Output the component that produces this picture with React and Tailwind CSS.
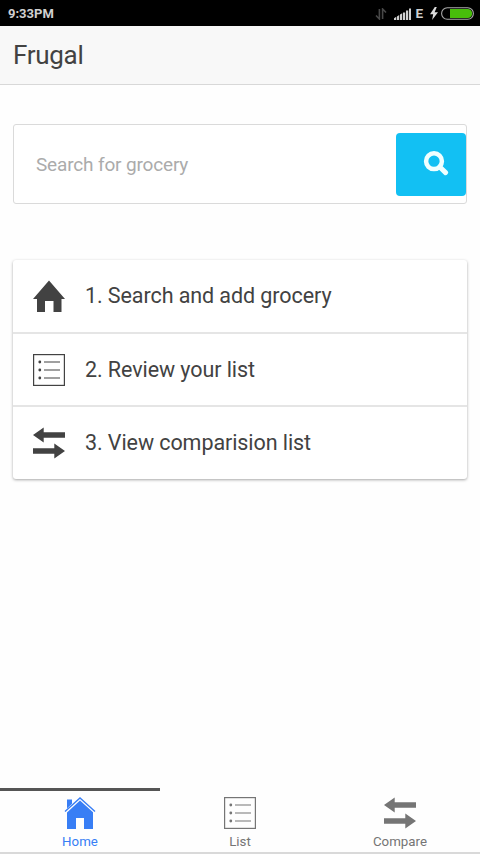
import React from 'react';

function HomeSolid() {
  return (
    <svg width="32" height="32" viewBox="0 0 32 32" fill="currentColor">
      <path d="M16 0.5 32 19H28.5V32H20.5V21H12V32H4V19H0Z" />
    </svg>
  );
}

function HomeChimney() {
  return (
    <svg width="32" height="33" viewBox="0 0 32 33" fill="currentColor">
      <path d="M3 2.5H8V6.8L3 11.4Z" />
      <path d="M1 14.5 16 1 31 14.5" fill="none" stroke="currentColor" strokeWidth="1.4" />
      <path d="M16 3.6 29 15.2V32H20V21H12V32H3V15.4Z" />
    </svg>
  );
}

function ListIcon() {
  return (
    <svg width="32" height="32" viewBox="0 0 32 32" fill="none" stroke="currentColor">
      <rect x="0.6" y="0.6" width="30.8" height="30.8" strokeWidth="1.2" />
      <path d="M11 8H27M11 16H27M11 24H27" strokeWidth="1.2" />
      <g fill="currentColor" stroke="none">
        <circle cx="6.8" cy="8" r="1.4" />
        <circle cx="6.8" cy="16" r="1.4" />
        <circle cx="6.8" cy="24" r="1.4" />
      </g>
    </svg>
  );
}

function SwapIcon() {
  return (
    <svg width="32" height="32" viewBox="0 0 32 32" fill="currentColor">
      <path d="M0 8 10.7 0.5V5.3H32V10.7H10.7V15.5Z" />
      <path d="M32 24 21.3 16.5V21.3H0V26.7H21.3V31.5Z" />
    </svg>
  );
}

function SearchIcon() {
  return (
    <svg width="26" height="26" viewBox="0 0 26 26" fill="none" stroke="currentColor">
      <circle cx="11" cy="10.2" r="7.9" strokeWidth="4.5" />
      <path d="M16.8 16 22.6 21.6" strokeWidth="5" strokeLinecap="round" />
    </svg>
  );
}

function StatusIcons() {
  return (
    <div className="flex items-center">
      <svg className="mr-[7px]" width="12" height="12" viewBox="0 0 12 12" fill="none" stroke="#484848" strokeWidth="1.6">
        <path d="M4.4 1V11L1 7.5M7.6 11V1L11 4.5" />
      </svg>
      <svg className="mr-[4px]" width="17" height="12" viewBox="0 0 17 12" fill="#d0d0d0">
        <path d="M0 12V10.3L2.3 8.7V12ZM3 12V8.4L5.2 7V12ZM6 12V6.6L8.2 5.2V12ZM9 12V4.6H11.2V12ZM12 12V2.6H14.2V12ZM15 12V0.5H17V12Z" />
      </svg>
      <span className="mr-[7px] text-[13.5px] leading-none font-bold text-[#d0d0d0]">E</span>
      <svg className="mr-[3px]" width="8" height="13" viewBox="0 0 8 13" fill="#dcdcdc">
        <path d="M4.8 0 0 7.3H3.2L2.1 13 8 5.2H4.6L6.8 0Z" />
      </svg>
      <svg width="33" height="13" viewBox="0 0 33 13">
        <rect x="0.6" y="0.8" width="31.8" height="11.4" rx="5.7" fill="none" stroke="#aaaaaa" strokeWidth="1.1" />
        <path d="M9 2H26.7A4.5 4.5 0 0 1 26.7 11H9Z" fill="#48bd0b" />
      </svg>
    </div>
  );
}

const steps = [
  { icon: HomeSolid, label: '1. Search and add grocery' },
  { icon: ListIcon, label: '2. Review your list' },
  { icon: SwapIcon, label: '3. View comparision list' },
];

export default function App() {
  return (
    <div className="flex h-[854px] w-[480px] flex-col overflow-hidden bg-[#fefefe] font-['Roboto',sans-serif] text-[#424242]">
      <div className="flex h-[26px] shrink-0 items-center justify-between bg-black pt-px pr-[6px] pl-2">
        <span className="text-[13px] leading-none font-bold text-[#d0d0d0]">9:33PM</span>
        <StatusIcons />
      </div>
      <header className="flex h-[59px] shrink-0 items-center border-b border-[#d8d8d8] bg-[#f8f8f8] px-[13px]">
        <h1 className="text-[26px] leading-none tracking-[-0.3px]">Frugal</h1>
      </header>

      <main className="flex-1 px-[13px] pt-[39px]">
        <div className="flex h-20 items-center justify-between rounded-[3px] border border-[#dadada] bg-white pl-[22px]">
          <span className="pt-[2px] text-[19px] tracking-[-0.16px] text-[#ababab]">Search for grocery</span>
          <button className="flex h-[63px] w-[70px] items-center justify-center rounded-[4px] bg-[#12c0f3] pl-[9px] text-[#f0ffff]">
            <SearchIcon />
          </button>
        </div>

        <ul className="mt-14 rounded-[3px] bg-white shadow-[0_1px_3px_rgba(0,0,0,0.35)]">
          {steps.map(({ icon: Icon, label }) => (
            <li key={label} className="flex h-[73px] items-center gap-5 border-b-2 border-[#e5e5e5] pl-5 first:h-[74px] last:h-[72px] last:border-b-0">
              <Icon />
              <span className="pt-px text-[21.5px] tracking-[-0.08px]">{label}</span>
            </li>
          ))}
        </ul>
      </main>

      <nav className="grid h-[66px] shrink-0 grid-cols-3 border-b-2 border-[#d9d9d9] text-[13.3px] leading-none text-[#757575]">
        <div className="flex flex-col items-center border-t-[3px] border-[#555555] pt-[6px] text-[#387ef5]">
          <HomeChimney />
          <span className="mt-[5px]">Home</span>
        </div>
        <div className="flex flex-col items-center pt-[9px]">
          <ListIcon />
          <span className="mt-[6px]">List</span>
        </div>
        <div className="flex flex-col items-center pt-[9px]">
          <SwapIcon />
          <span className="mt-[6px]">Compare</span>
        </div>
      </nav>
    </div>
  );
}
